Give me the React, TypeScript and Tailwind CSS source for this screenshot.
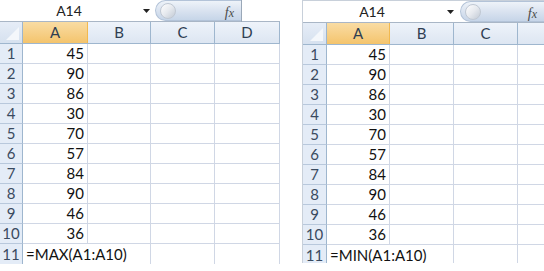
import React from "react";

const values = [45, 90, 86, 30, 70, 57, 84, 90, 46, 36];

function Corner({ w }: { w: number }) {
  return (
    <div
      className="relative h-full shrink-0 border-r border-[#9eb6ce] bg-gradient-to-b from-[#e6edf7] to-[#d6e1ef]"
      style={{ width: w }}
    >
      <svg className="absolute right-[3px] bottom-[3px]" width="13" height="13" viewBox="0 0 13 13">
        <polygon points="13,0 13,13 0,13" fill="#f4f7fb" />
      </svg>
    </div>
  );
}

function Pill({ fxRightLine }: { fxRightLine: boolean }) {
  return (
    <div className="flex h-full flex-1 items-stretch">
      <div className="relative flex h-[21px] flex-1 items-center rounded-l-full border border-r-0 border-[#b3c3d8] bg-gradient-to-b from-[#eef3f9] via-[#dae3f0] to-[#c6d5e8]">
        <div className="ml-[4px] h-[16px] w-[16px] rounded-full border border-[#c0c8d3] bg-gradient-to-br from-white via-[#e6e9ee] to-[#c2cad5]" />
        <span
          className="absolute right-[7px] top-[1px] text-[14px] italic text-[#4a4a4a]"
          style={{ fontFamily: '"Liberation Serif", serif' }}
        >
          f<span className="text-[12px]">x</span>
        </span>
      </div>
      {fxRightLine && <div className="h-[22px] w-[1px] bg-[#9aa8b8]" />}
    </div>
  );
}

type PanelProps = {
  rowHeaderW: number;
  colWidths: number[];
  colLabels: string[];
  formula: string;
  nameW: number;
  arrowGap: number;
  pillW: number | null;
  bordered: boolean;
  width: number;
  height: number;
};

function Panel(p: PanelProps) {
  return (
    <div
      className={`flex shrink-0 flex-col self-start overflow-hidden ${p.bordered ? "border-l border-t border-[#c8d0da]" : ""}`}
      style={{ width: p.width, height: p.height }}
    >
      {/* top bar */}
      <div className="flex h-[22px] shrink-0 items-center border-b border-[#a9b6c6] bg-white">
        <div className="flex h-full items-center justify-center text-[14px] text-[#222]" style={{ width: p.nameW }}>
          A14
        </div>
        <div className="flex h-full items-center justify-center" style={{ width: p.arrowGap }}>
          <svg width="7" height="4" viewBox="0 0 7 4">
            <polygon points="0,0 7,0 3.5,4" fill="#222" />
          </svg>
        </div>
        <div className="flex h-full items-center" style={p.pillW ? { width: p.pillW } : { flex: 1 }}>
          <Pill fxRightLine={!!p.pillW} />
        </div>
      </div>
      {/* header row */}
      <div className="flex h-[22px] shrink-0 border-b border-[#9eb6ce] text-[15px] text-[#2f3e52]">
        <Corner w={p.rowHeaderW} />
        {p.colLabels.map((c, i) => (
          <div
            key={c + i}
            className={`flex h-full shrink-0 items-center justify-center border-r ${
              i === 0
                ? "border-[#f2b94f] bg-gradient-to-b from-[#f9dca3] to-[#f4c46c]"
                : "border-[#9eb6ce] bg-gradient-to-b from-[#eef3fa] to-[#dde6f2]"
            }`}
            style={{ width: p.colWidths[i] }}
          >
            {c}
          </div>
        ))}
      </div>
      {/* rows */}
      {[...values.map((v) => String(v)), "F"].map((v, r) => (
        <div key={r} className="flex h-[20px] shrink-0 text-[15px]">
          <div
            className={`flex h-full shrink-0 items-center justify-center border-r border-[#9eb6ce] bg-[#e4ecf7] text-[#3a4a60] ${
              r < 10 ? "border-b border-b-[#b8c8dc]" : ""
            }`}
            style={{ width: p.rowHeaderW }}
          >
            {r + 1}
          </div>
          {p.colWidths.map((w, i) => (
            <div
              key={i}
              className={`relative flex h-full shrink-0 items-center justify-end pr-[3px] text-[#111] ${
                r === 10 && i === 0 ? "" : "border-r border-[#d0d7e5]"
              } ${r < 10 ? "border-b border-b-[#d0d7e5]" : ""}`}
              style={{ width: w }}
            >
              {i === 0 && r < 10 ? v : null}
              {i === 0 && r === 10 ? (
                <span className="absolute left-[3px] top-0 whitespace-nowrap leading-[20px]">{p.formula}</span>
              ) : null}
            </div>
          ))}
        </div>
      ))}
    </div>
  );
}

export default function App() {
  return (
    <div
      className="flex h-[271px] w-[544px] items-start overflow-hidden bg-white"
      style={{ fontFamily: "Lato, 'Open Sans', sans-serif" }}
    >
      <Panel
        width={280}
        height={266}
        rowHeaderW={23}
        colWidths={[65, 63, 64, 65]}
        colLabels={["A", "B", "C", "D"]}
        formula="=MAX(A1:A10)"
        nameW={138}
        arrowGap={17}
        pillW={87}
        bordered={false}
      />
      <div className="w-[22px] shrink-0" />
      <Panel
        width={242}
        height={263}
        rowHeaderW={24}
        colWidths={[63, 64, 64, 40]}
        colLabels={["A", "B", "C", ""]}
        formula="=MIN(A1:A10)"
        nameW={138}
        arrowGap={19}
        pillW={null}
        bordered={true}
      />
    </div>
  );
}
